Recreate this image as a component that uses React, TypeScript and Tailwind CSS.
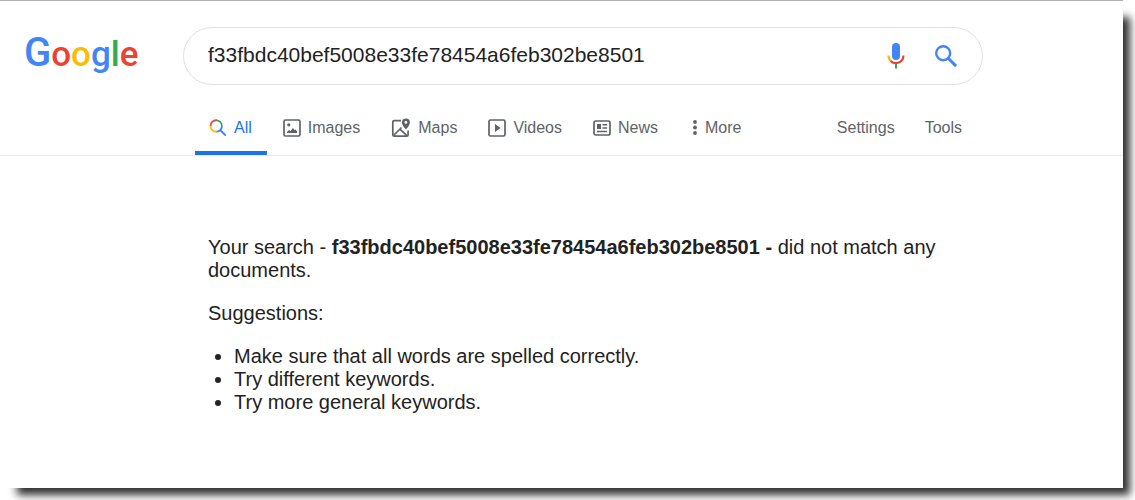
import React from "react";

const QUERY = "f33fbdc40bef5008e33fe78454a6feb302be8501";

function Logo() {
  return (
    <a
      href="#home"
      aria-label="Google"
      className="flex w-[183px] shrink-0 items-baseline pb-1 pl-6 font-['Roboto','Liberation_Sans',sans-serif] text-[35px] leading-[48px] font-medium"
    >
      <span className="text-[40px] text-[#4285f4]">G</span>
      <span className="text-[#ea4335]">o</span>
      <span className="text-[#fbbc05]">o</span>
      <span className="text-[#4285f4]">g</span>
      <span className="text-[#34a853]">l</span>
      <span className="text-[#ea4335]">e</span>
    </a>
  );
}

function MicIcon() {
  return (
    <svg width="20" height="28" viewBox="0 0 20 28" fill="none" aria-hidden="true">
      <rect x="6" y="1" width="8" height="17" rx="4" fill="#4285f4" />
      <path d="M9 21h2v5.500H9z" fill="#34a853" />
      <path d="M2.500 13.500c0 2.600 1 4.500 2.600 5.800" stroke="#fbbc05" strokeWidth="2.200" />
      <path d="M4.600 18.900C6 20.400 8 21.200 10 21.200c4.300 0 7.500-3.200 7.500-7.700" stroke="#ea4335" strokeWidth="2.200" />
    </svg>
  );
}

function SearchIcon() {
  return (
    <svg width="24" height="24" viewBox="0 0 24 24" fill="none" stroke="#4285f4" aria-hidden="true">
      <circle cx="9.200" cy="9.200" r="7" strokeWidth="2.400" />
      <path d="M14.500 14.500l7.600 7.600" strokeWidth="3" />
    </svg>
  );
}

function AllIcon() {
  return (
    <svg width="18" height="18" viewBox="0 0 18 18" fill="none" strokeWidth="1.800" aria-hidden="true">
      <path d="M1.500 7A5.700 5.700 0 0 1 8 1.300" stroke="#ea4335" />
      <path d="M7.200 1.300A5.700 5.700 0 0 1 12.900 7" stroke="#34a853" />
      <path d="M12.900 7a5.700 5.700 0 0 1-5.700 5.700" stroke="#4285f4" />
      <path d="M7.600 12.700A5.700 5.700 0 0 1 1.500 6.500" stroke="#fbbc05" />
      <path d="M11.200 11l5.600 5.600" stroke="#4285f4" strokeWidth="2" />
    </svg>
  );
}

function ImagesIcon() {
  return (
    <svg width="18" height="18" viewBox="0 0 18 18" fill="none" aria-hidden="true">
      <rect x="1" y="1" width="16" height="16" rx="1.500" stroke="#5f6368" strokeWidth="1.700" />
      <circle cx="5.800" cy="5.800" r="1.600" fill="#5f6368" />
      <path d="M4 14v-1l2-2 1.500 1L10 9l1.500 2 1-.5L14 12.500V14z" fill="#5f6368" />
    </svg>
  );
}

function MapsIcon() {
  return (
    <svg width="20" height="20" viewBox="0 0 20 20" fill="none" aria-hidden="true">
      <path d="M10 2.700H3.200Q1.800 2.700 1.800 4.100V16.700Q1.800 18.100 3.200 18.100H15.700Q17.100 18.100 17.100 16.700V12.500" stroke="#5f6368" strokeWidth="1.700" />
      <path d="M2.500 17.500L10.500 9.500M8.800 11.200l7.200 6.400" stroke="#5f6368" strokeWidth="1.700" />
      <path d="M14.900.5a4 4 0 0 0-4 4c0 3 4 7 4 7s4-4 4-7a4 4 0 0 0-4-4zm0 5.300a1.400 1.400 0 1 1 0-2.800 1.400 1.400 0 0 1 0 2.800z" fill="#5f6368" fillRule="evenodd" />
    </svg>
  );
}

function VideosIcon() {
  return (
    <svg width="18" height="18" viewBox="0 0 18 18" fill="none" aria-hidden="true">
      <rect x="1" y="1" width="16" height="16" rx="1.500" stroke="#5f6368" strokeWidth="1.700" />
      <path d="M7 5l5.500 4L7 13z" fill="#5f6368" />
    </svg>
  );
}

function NewsIcon() {
  return (
    <svg width="18" height="18" viewBox="0 0 18 18" fill="none" aria-hidden="true">
      <rect x="1" y="2" width="16" height="14" rx="1.800" stroke="#5f6368" strokeWidth="1.700" />
      <path d="M4 5h4v5H4zM9.500 5H14v1.500H9.500zM9.500 8.300H14v1.500H9.500zM4 11.700h10v1.500H4z" fill="#5f6368" />
    </svg>
  );
}

function MoreIcon() {
  return (
    <svg width="6" height="18" viewBox="0 0 6 18" fill="#5f6368" aria-hidden="true">
      <circle cx="3" cy="3" r="1.900" />
      <circle cx="3" cy="8.500" r="1.900" />
      <circle cx="3" cy="14" r="1.900" />
    </svg>
  );
}

const tabs = [
  { label: "Images", Icon: ImagesIcon },
  { label: "Maps", Icon: MapsIcon },
  { label: "Videos", Icon: VideosIcon },
  { label: "News", Icon: NewsIcon },
];

const suggestions = [
  "Make sure that all words are spelled correctly.",
  "Try different keywords.",
  "Try more general keywords.",
];

export default function App() {
  return (
    <div className="min-h-screen overflow-hidden bg-white pr-3 pb-3 font-['Liberation_Sans',Arial,sans-serif] text-[#222222]">
      <div className="border-t border-[#b0b0b0] bg-white pb-[74px] shadow-[12px_12px_8px_-5px_#333333]">
        <header className="border-b border-[#ebebeb]">
          <form role="search" className="flex items-center pt-[26px]" onSubmit={(e) => e.preventDefault()}>
            <Logo />
            <div className="flex h-[58px] w-full max-w-[800px] items-center rounded-full border border-[#dfe1e5] pr-6 pl-6">
              <input
                type="text"
                name="q"
                aria-label="Search"
                defaultValue={QUERY}
                className="min-w-0 flex-1 bg-transparent pb-0.5 text-[21px] leading-7 outline-none"
              />
              <button type="button" aria-label="Search by voice" className="mr-7">
                <MicIcon />
              </button>
              <button type="submit" aria-label="Google Search">
                <SearchIcon />
              </button>
            </div>
          </form>
          <div className="mt-[14px] flex max-w-[962px] items-stretch justify-between pl-[195px] text-base leading-5 text-[#5f6368]">
            <nav aria-label="Search types" className="flex gap-px">
              <a
                href="#all"
                aria-current="page"
                className="flex h-14 items-center gap-[7px] border-b-4 border-[#1a73e8] pt-1.5 pr-[15px] pl-[14px] text-[#1a73e8]"
              >
                <AllIcon />
                All
              </a>
              {tabs.map(({ label, Icon }) => (
                <a key={label} href={"#" + label.toLowerCase()} className="flex h-14 items-center gap-[7px] border-b-4 border-transparent px-[15px] pt-1.5">
                  <Icon />
                  {label}
                </a>
              ))}
              <button type="button" className="flex h-14 items-center gap-[7px] border-b-4 border-transparent pt-1.5 pl-[18px]">
                <MoreIcon />
                More
              </button>
            </nav>
            <div className="flex items-center gap-[30px] border-b-4 border-transparent pt-1.5">
              <a href="#settings">Settings</a>
              <a href="#tools">Tools</a>
            </div>
          </div>
        </header>
        <main className="max-w-[983px] pt-20 pl-[208px] text-xl leading-[23px]">
          <p>
            Your search - <b>{QUERY} -</b> did not match any documents.
          </p>
          <p className="mt-5">Suggestions:</p>
          <ul className="mt-5 list-disc pl-[26px]">
            {suggestions.map((text) => (
              <li key={text}>{text}</li>
            ))}
          </ul>
        </main>
      </div>
    </div>
  );
}
